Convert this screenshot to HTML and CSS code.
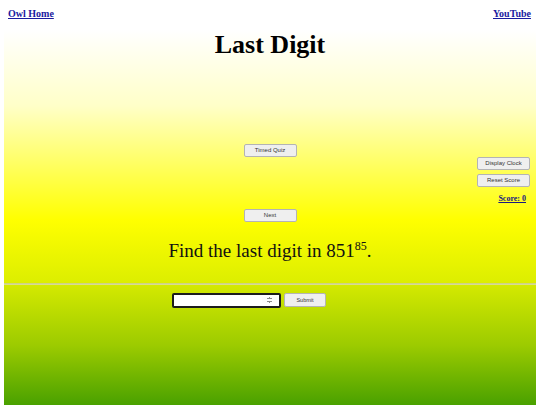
FILE: index.html
```html
<!DOCTYPE html>
<html>
<head>
<meta charset="utf-8">
<link rel="stylesheet" href="styles.css">
</head>
<body>
<div class="topbar">
  <a href="#" class="navlink">Owl Home</a>
  <a href="#" class="navlink">YouTube</a>
</div>
<div class="upper">
  <h1 class="title">Last Digit</h1>
  <div class="controls">
    <div class="spacer"></div>
    <div class="center-col">
      <button class="btn">Timed Quiz</button>
      <button class="btn">Next</button>
    </div>
    <div class="side-col">
      <button class="btn">Display Clock</button>
      <button class="btn">Reset Score</button>
      <a href="#" class="score">Score: 0</a>
    </div>
  </div>
  <p class="question">Find the last digit in 851<sup class="exp">85</sup>.</p>
</div>
<div class="divider"></div>
<div class="lower">
  <div class="answer-row">
    <input class="answer" type="number" autofocus>
    <button class="btn submit">Submit</button>
  </div>
</div>
</body>
</html>
```

FILE: styles.css
```css
html, body {
  margin: 0;
  padding: 0;
  background: #ffffff;
  font-family: "Liberation Serif", "Times New Roman", serif;
}
.topbar {
  display: flex;
  justify-content: space-between;
  padding: 8px 9px 0 8px;
  height: 22px;
}
.navlink {
  font-size: 10px;
  line-height: 12px;
  font-weight: bold;
  color: #1a1aa0;
  text-decoration: underline;
}
.upper {
  margin: 0 4px;
  height: 253px;
  display: flex;
  flex-direction: column;
  background: linear-gradient(to bottom, #ffffff 0%, #ffffc8 30%, #ffff00 75%, #dcee00 100%);
}
.title {
  margin: 2px 0 0 0;
  text-align: center;
  font-size: 26px;
  line-height: 26px;
  font-weight: bold;
  color: #000;
}
.controls {
  display: grid;
  grid-template-columns: 1fr auto 1fr;
  margin-top: 86px;
}
.center-col {
  display: flex;
  flex-direction: column;
  align-items: center;
  gap: 52px;
}
.side-col {
  display: flex;
  flex-direction: column;
  align-items: flex-end;
  padding-top: 13px;
  padding-right: 6px;
  gap: 4px;
}
.btn {
  font-family: "Liberation Sans", Arial, sans-serif;
  font-size: 6px;
  line-height: 7px;
  color: #333;
  width: 53px;
  height: 13px;
  padding: 0;
  background: #efefef;
  border: 1px solid #b4b4b4;
  border-radius: 2px;
}
.score {
  margin-top: 3px;
  margin-right: 4px;
  font-size: 8px;
  line-height: 10px;
  font-weight: bold;
  color: #1a1a80;
  text-decoration: underline;
}
.question {
  margin: 18px 0 0 0;
  text-align: center;
  font-size: 19px;
  line-height: 22px;
  color: #111;
}
.exp {
  font-size: 12px;
  line-height: 0;
}
.divider {
  margin: 0 4px;
  height: 2px;
  background: linear-gradient(to bottom, #c8cc80, #dde296);
}
.lower {
  margin: 0 4px;
  height: 121px;
  background: linear-gradient(to bottom, #d4e900 0%, #9ccb00 50%, #48a000 100%);
  padding-top: 8px;
  box-sizing: border-box;
}
.answer-row {
  display: flex;
  justify-content: center;
  align-items: flex-start;
  gap: 3px;
  padding-right: 42px;
}
.answer {
  width: 109px;
  height: 15px;
  box-sizing: border-box;
  border: 2px solid #1c1c1c;
  border-radius: 2px;
  background: #fff;
  font-size: 7px;
  padding: 0 2px;
  outline: none;
}
.submit {
  width: 42px;
  height: 14px;
  font-size: 5.5px;
}
```
